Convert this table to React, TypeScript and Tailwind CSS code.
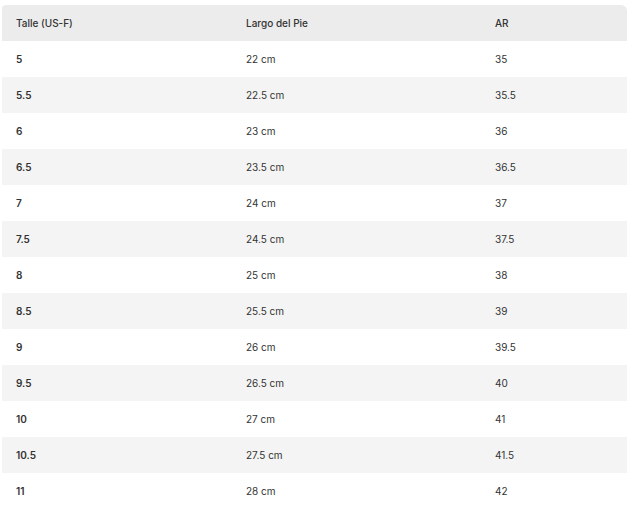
const rows: [string, string, string][] = [
  ["5", "22 cm", "35"],
  ["5.5", "22.5 cm", "35.5"],
  ["6", "23 cm", "36"],
  ["6.5", "23.5 cm", "36.5"],
  ["7", "24 cm", "37"],
  ["7.5", "24.5 cm", "37.5"],
  ["8", "25 cm", "38"],
  ["8.5", "25.5 cm", "39"],
  ["9", "26 cm", "39.5"],
  ["9.5", "26.5 cm", "40"],
  ["10", "27 cm", "41"],
  ["10.5", "27.5 cm", "41.5"],
  ["11", "28 cm", "42"],
]

export default function App() {
  return (
    <div className="w-[628px] h-[513px] bg-white pl-[2px] pt-[5px] pr-[1px] overflow-hidden font-['Inter',_sans-serif] text-[10px] text-[#333]">
      <table className="w-full border-collapse table-fixed">
        <colgroup>
          <col className="w-[230px]" />
          <col className="w-[249px]" />
          <col />
        </colgroup>
        <thead>
          <tr className="h-[36px] bg-[#ececec]">
            <th className="pl-[14px] text-left font-medium rounded-tl-[4px]">Talle (US-F)</th>
            <th className="pl-[14px] text-left font-medium">Largo del Pie</th>
            <th className="pl-[14px] text-left font-medium rounded-tr-[6px]">AR</th>
          </tr>
        </thead>
        <tbody>
          {rows.map((r, i) => (
            <tr key={r[0]} className={i % 2 === 1 ? "h-[36px] bg-[#f4f4f4]" : "h-[36px] bg-white"}>
              <td className="pl-[14px] font-semibold">{r[0]}</td>
              <td className="pl-[14px]">{r[1]}</td>
              <td className="pl-[14px]">{r[2]}</td>
            </tr>
          ))}
        </tbody>
      </table>
    </div>
  )
}
